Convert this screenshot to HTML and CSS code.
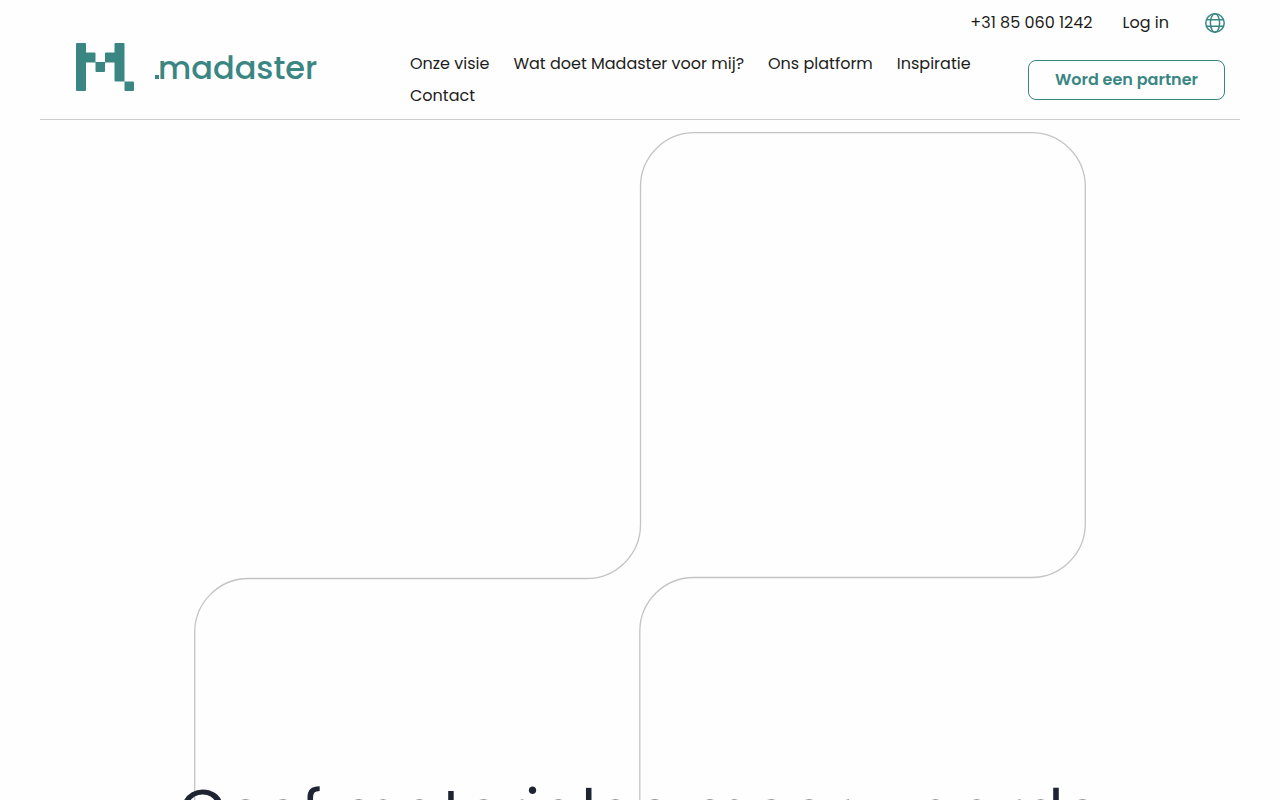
FILE: index.html
```html
<!DOCTYPE html>
<html lang="nl">
<head>
    <meta charset="UTF-8">
    <meta name="viewport" content="width=device-width, initial-scale=1.0">
    <title>Madaster</title>
    <link rel="stylesheet" href="styles.css">
</head>
<body>
    <header class="site-header">
        <a class="logo" href="#" aria-label="Madaster">
            <svg class="logo-mark" viewBox="0 0 58 48" aria-hidden="true">
                <path d="M0 1Q0 0 1 0H9Q10 0 10 1V9.500H18.500Q19.500 9.500 19.500 10.500V19H29V10.500Q29 9.500 30 9.500H38.500V1Q38.500 0 39.500 0H47.500Q48.500 0 48.500 1V38.500H57Q58 38.500 58 39.500V47Q58 48 57 48H49.500Q48.500 48 48.500 47V38.500H39.500Q38.500 38.500 38.500 37.500V19.500H29V28Q29 29 28 29H20.500Q19.500 29 19.500 28V19.500H10V47Q10 48 9 48H1Q0 48 0 47Z"/>
            </svg>
            <span class="logo-name"><span class="logo-dot"></span>madaster</span>
        </a>
        <div class="top-bar">
            <a href="tel:+31850601242">+31 85 060 1242</a>
            <a href="#">Log in</a>
            <button class="language" type="button" aria-label="Taal kiezen">
                <svg viewBox="0 0 20 20" aria-hidden="true">
                    <circle cx="10" cy="10" r="9.200"/>
                    <ellipse cx="10" cy="10" rx="4.600" ry="9.200"/>
                    <path d="M1.500 6.700H18.500M1.500 13.300H18.500"/>
                </svg>
            </button>
        </div>
        <nav class="main-nav">
            <a href="#">Onze visie</a>
            <a href="#">Wat doet Madaster voor mij?</a>
            <a href="#">Ons platform</a>
            <a href="#">Inspiratie</a>
            <a href="#">Contact</a>
        </nav>
        <a class="partner-button" href="#">Word een partner</a>
    </header>
    <main class="hero">
        <svg class="hero-shape" viewBox="0 0 892 892" aria-hidden="true">
            <path d="M54.500 446.500H392.500A54 54 0 0 0 446.500 392.500V54.500A54 54 0 0 1 500.500 .7H837.500A54 54 0 0 1 891.300 54.500V392.500A54 54 0 0 1 837.500 445.500H500A54 54 0 0 0 445.800 499.500V837.500A54 54 0 0 1 391.500 891.300H54.500A54 54 0 0 1 .7 837.500V500.500A54 54 0 0 1 54.500 446.500Z"/>
        </svg>
        <h1>Geef materialen meer waarde</h1>
    </main>
</body>
</html>
```
FILE: styles.css
```css
* {
    box-sizing: border-box;
}
body {
    margin: 0;
    background-color: #fefefe;
    color: #1d1d1b;
    font-family: Poppins, Inter, sans-serif;
    font-size: 16px;
    line-height: 32px;
}
a {
    color: inherit;
    text-decoration: none;
}
.site-header {
    display: grid;
    grid-template-columns: 334px 1fr auto;
    grid-template-rows: 48px auto;
    max-width: 1200px;
    margin: 0 auto;
    padding: 0 15px 7px 36px;
    border-bottom: 1px solid #ccc;
}
.logo {
    grid-row: 1 / 3;
    display: flex;
    align-items: center;
    gap: 21px;
    padding-top: 22px;
    color: #3a8683;
}
.logo-mark {
    width: 58px;
    height: 48px;
    fill: currentColor;
}
.logo-name {
    display: flex;
    align-items: baseline;
    padding-top: 2px;
    font-size: 32px;
    font-weight: 500;
}
.logo-dot {
    width: 4px;
    height: 4px;
    margin-right: -1px;
    background-color: currentColor;
}
.top-bar {
    grid-column: 2 / 4;
    display: flex;
    justify-content: flex-end;
    align-items: center;
    gap: 30px;
    padding-bottom: 2px;
}
.language {
    display: flex;
    margin-left: 6px;
    padding: 0;
    border: 0;
    background: none;
    cursor: pointer;
}
.language svg {
    width: 20px;
    height: 20px;
    fill: none;
    stroke: #3a8683;
    stroke-width: 1.5;
}
.main-nav {
    display: flex;
    flex-wrap: wrap;
    column-gap: 24px;
    padding-right: 32px;
}
.partner-button {
    align-self: center;
    padding: 3px 26px;
    border: 1px solid #3a8683;
    border-radius: 8px;
    color: #3a8683;
    font-weight: 600;
}
.hero {
    display: grid;
    justify-items: center;
    padding-top: 12px;
}
.hero-shape {
    grid-area: 1 / 1;
    width: 892px;
    max-width: 100%;
    fill: none;
    stroke: #c4c4c4;
    stroke-width: 1.3;
}
.hero h1 {
    grid-area: 1 / 1;
    margin: 0;
    padding-top: 640px;
    color: #1f2433;
    font-size: 61px;
    font-weight: 400;
    line-height: 80px;
    text-align: center;
}
```
